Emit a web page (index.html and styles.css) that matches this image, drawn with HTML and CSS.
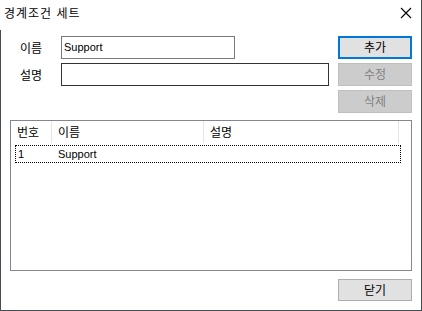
FILE: index.html
```html
<!DOCTYPE html>
<html lang="ko">
<head>
    <meta charset="UTF-8">
    <title>경계조건 세트</title>
    <link rel="stylesheet" href="styles.css">
</head>
<body>

    <div class="dialog">
        <!-- Title bar -->
        <div class="titlebar">
            <span class="title">경계조건 세트</span>
            <svg class="close" width="12" height="12" viewBox="0 0 12 12">
                <path d="M1 1 L11 11 M11 1 L1 11" stroke="#000" stroke-width="1.1" fill="none"/>
            </svg>
        </div>

        <div class="content">
            <div class="top">
                <div class="form">
                    <div class="form-row">
                        <label>이름</label>
                        <div class="textbox short">Support</div>
                    </div>
                    <div class="form-row">
                        <label>설명</label>
                        <div class="textbox long dark"></div>
                    </div>
                </div>
                <div class="buttons">
                    <div class="btn default">추가</div>
                    <div class="btn disabled">수정</div>
                    <div class="btn disabled">삭제</div>
                </div>
            </div>

            <!-- List view -->
            <div class="listview">
                <div class="list-header">
                    <div class="col col-no">번호</div>
                    <div class="col col-name">이름</div>
                    <div class="col col-desc">설명</div>
                    <div class="col col-rest"></div>
                </div>
                <div class="list-row">
                    <span class="cell-no">1</span>
                    <span class="cell-name">Support</span>
                </div>
            </div>

            <div class="footer">
                <div class="btn">닫기</div>
            </div>
        </div>
    </div>

</body>
</html>
```

FILE: styles.css
```css
/* General */
body {
    margin: 0;
    padding: 0;
    background: #ffffff;
    font-family: "Noto Sans CJK KR", "Liberation Sans", sans-serif;
    font-size: 12px;
    color: #000;
}

.dialog {
    width: 422px;
    height: 311px;
    box-sizing: border-box;
    background: #ffffff;
    border-right: 1px solid #454c52;
    border-bottom: 1px solid #454c52;
}

/* Title bar */
.titlebar {
    height: 30px;
    display: flex;
    align-items: center;
    justify-content: space-between;
    padding: 0 9px 4px 4px;
    box-sizing: border-box;
}

.title {
    font-size: 12px;
    line-height: 14px;
    letter-spacing: 1px;
}

.close {
    display: block;
}

/* Body */
.content {
    height: 280px;
    box-sizing: border-box;
    border-left: 1px solid #454c52;
    padding: 6px 9px 0 9px;
    display: flex;
    flex-direction: column;
}

.top {
    display: flex;
    justify-content: space-between;
    height: 77px;
}

.form {
    display: flex;
    flex-direction: column;
    gap: 4px;
}

.form-row {
    display: flex;
    align-items: center;
    height: 23px;
}

.form-row label {
    width: 51px;
    padding-left: 10px;
    box-sizing: border-box;
    font-size: 12px;
}

.textbox {
    height: 23px;
    box-sizing: border-box;
    border: 1px solid #7a7a7a;
    padding: 0 2px;
    font-family: "Liberation Sans", sans-serif;
    font-size: 11px;
    line-height: 21px;
}

.textbox.short {
    width: 174px;
}

.textbox.long {
    width: 268px;
}

.textbox.dark {
    border-color: #333333;
}

.buttons {
    display: flex;
    flex-direction: column;
    gap: 4px;
}

.btn {
    width: 74px;
    height: 23px;
    box-sizing: border-box;
    background: #e1e1e1;
    border: 1px solid #adadad;
    text-align: center;
    line-height: 20px;
    font-size: 12px;
}

.btn.default {
    border: 2px solid #0078d7;
    line-height: 18px;
}

.btn.disabled {
    background: #cccccc;
    border-color: #bfbfbf;
    color: #838383;
}

/* List view */
.listview {
    margin-top: 7px;
    height: 151px;
    box-sizing: border-box;
    border: 1px solid #828790;
}

.list-header {
    display: flex;
    height: 22px;
}

.col {
    box-sizing: border-box;
    border-right: 1px solid #e5e5e5;
    padding-left: 6px;
    line-height: 22px;
    font-size: 12px;
}

.col-no {
    width: 41px;
}

.col-name {
    width: 152px;
}

.col-desc {
    width: 195px;
}

.col-rest {
    flex: 1;
    border-right: none;
}

.list-row {
    margin: 2px 10px 0 4px;
    height: 18px;
    box-sizing: border-box;
    border: 1px dotted #000;
    display: flex;
    align-items: center;
    font-family: "Liberation Sans", sans-serif;
    font-size: 11px;
}

.cell-no {
    width: 40px;
    padding-left: 2px;
}

/* Footer */
.footer {
    margin-top: 8px;
    display: flex;
    justify-content: flex-end;
}

.footer .btn {
    height: 22px;
    line-height: 20px;
}
```
